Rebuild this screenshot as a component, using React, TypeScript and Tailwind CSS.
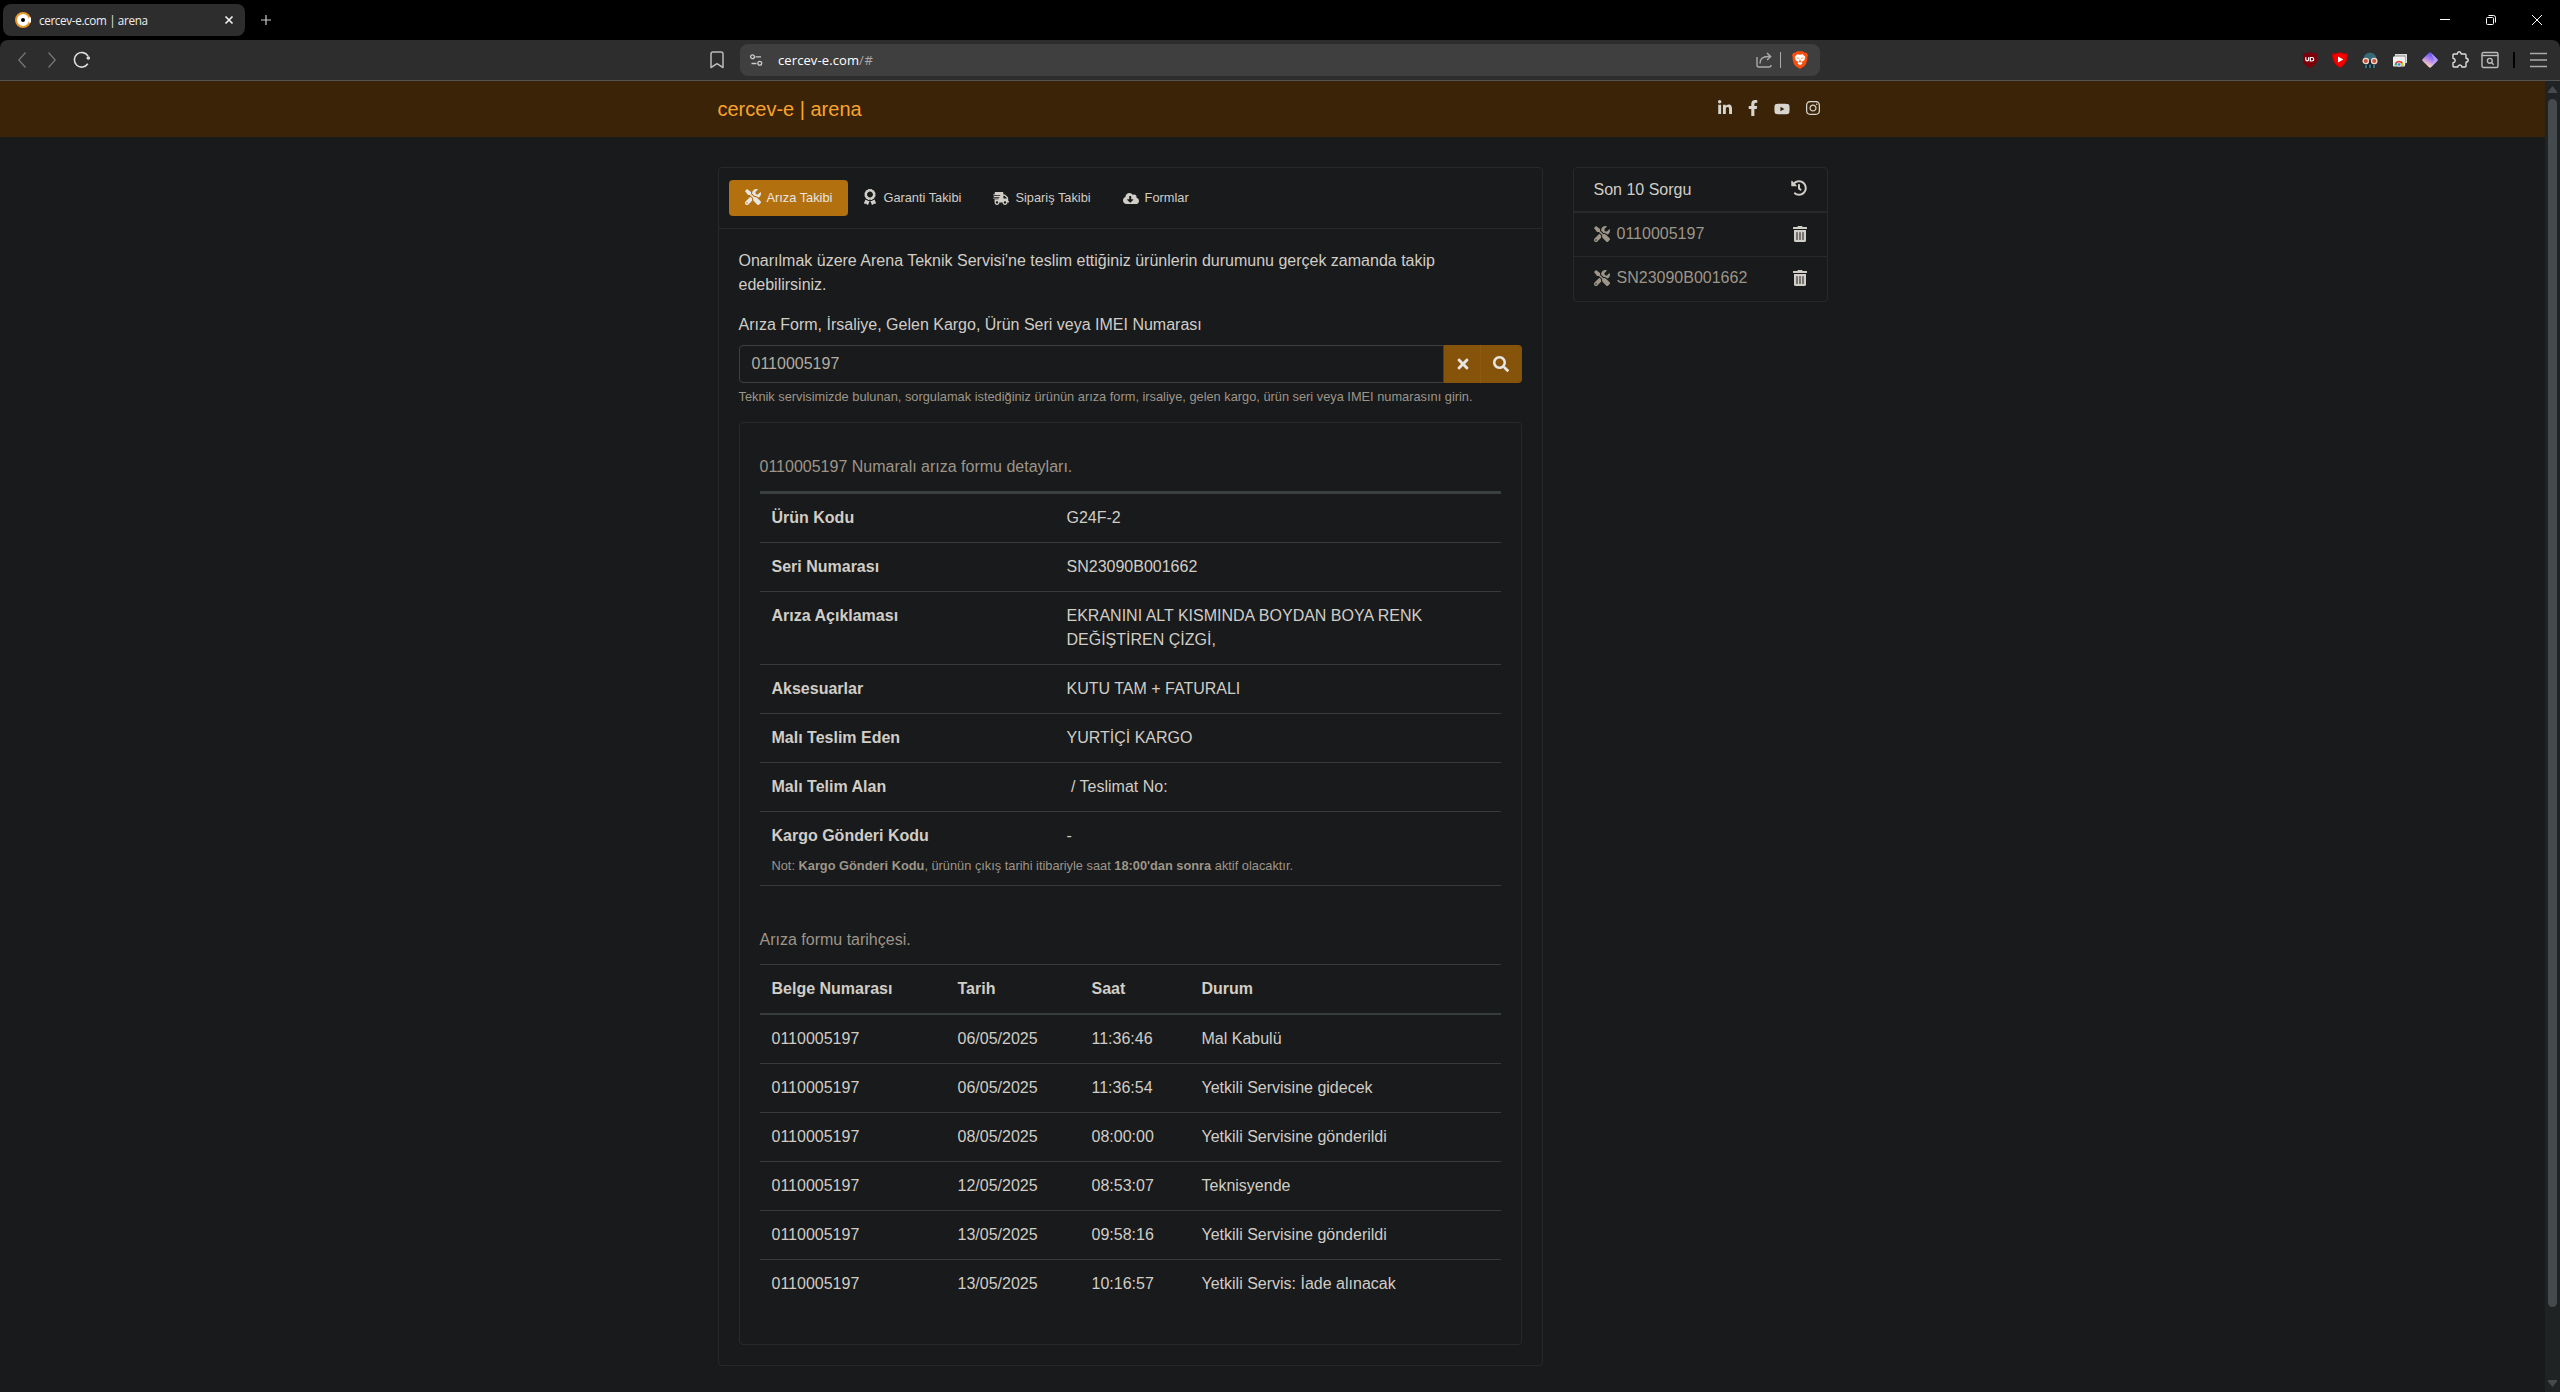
import {
    FaAward,
    FaCloudDownloadAlt,
    FaFacebookF,
    FaHistory,
    FaInstagram,
    FaLinkedinIn,
    FaSearch,
    FaShippingFast,
    FaTimes,
    FaTools,
    FaTrashAlt,
    FaYoutube,
} from "react-icons/fa";

const details = [
    { label: "Ürün Kodu", value: "G24F-2" },
    { label: "Seri Numarası", value: "SN23090B001662" },
    { label: "Arıza Açıklaması", value: "EKRANINI ALT KISMINDA BOYDAN BOYA RENK DEĞİŞTİREN ÇİZGİ," },
    { label: "Aksesuarlar", value: "KUTU TAM + FATURALI" },
    { label: "Malı Teslim Eden", value: "YURTİÇİ KARGO" },
    { label: "Malı Telim Alan", value: "\u00a0/ Teslimat No:" },
];

const history = [
    { no: "0110005197", date: "06/05/2025", time: "11:36:46", status: "Mal Kabulü" },
    { no: "0110005197", date: "06/05/2025", time: "11:36:54", status: "Yetkili Servisine gidecek" },
    { no: "0110005197", date: "08/05/2025", time: "08:00:00", status: "Yetkili Servisine gönderildi" },
    { no: "0110005197", date: "12/05/2025", time: "08:53:07", status: "Teknisyende" },
    { no: "0110005197", date: "13/05/2025", time: "09:58:16", status: "Yetkili Servisine gönderildi" },
    { no: "0110005197", date: "13/05/2025", time: "10:16:57", status: "Yetkili Servis: İade alınacak" },
];

const queries = ["0110005197", "SN23090B001662"];

const TabStrip = () => {
    return (
        <div className="flex h-10 items-center justify-between bg-black pl-[3px] pr-[18px]">
            <div className="flex items-center">
                <div className="flex h-8 w-[242px] items-center rounded-lg bg-[#2d2d2d] pl-3 pr-[11px]">
                    <svg className="size-4" viewBox="0 0 16 16">
                        <circle cx="8" cy="8" r="7" fill="#fff" stroke="#e8962e" strokeWidth="2" />
                        <path d="M14 5.5h2v5h-2z" fill="#fff" />
                        <circle cx="8" cy="8" r="2" fill="#000" />
                    </svg>
                    <span className="ml-2 flex-1 whitespace-nowrap text-[11.7px] leading-4 tracking-[-0.36px] text-[#eee]">cercev-e.com | arena</span>
                    <svg className="size-[10px]" viewBox="0 0 10 10" stroke="#eee" strokeWidth="1.7">
                        <path d="M1.5 1.5l7 7M8.5 1.5l-7 7" />
                    </svg>
                </div>
                <svg className="ml-4 size-[10px]" viewBox="0 0 10 10" stroke="#ccc" strokeWidth="1.2">
                    <path d="M5 0v10M0 5h10" />
                </svg>
            </div>
            <div className="flex items-center gap-9">
                <svg className="size-[10px]" viewBox="0 0 10 10" stroke="#fff">
                    <path d="M0 4.5h10" />
                </svg>
                <svg className="size-[10px]" viewBox="0 0 10 10" fill="none" stroke="#fff">
                    <rect x=".5" y="2.5" width="7" height="7" rx="1" />
                    <path d="M2.5 .5h5a2 2 0 012 2v5" />
                </svg>
                <svg className="size-[10px]" viewBox="0 0 10 10" stroke="#fff">
                    <path d="M0 0l10 10M10 0L0 10" />
                </svg>
            </div>
        </div>
    )
}

const Extensions = () => {
    return (
        <div className="flex items-center">
            <svg className="size-4" viewBox="0 0 16 16">
                <path d="M8 0c2.500 1.200 5 1.500 7 1.500V8c0 4-3.500 6-7 8-3.500-2-7-4-7-8V1.500C3 1.500 5.500 1.200 8 0z" fill="#7c0009" />
                <path d="M3.800 5.200v2.300a1.400 1.400 0 002.800 0V5.200" fill="none" stroke="#fff" strokeWidth="1.200" />
                <path d="M8.300 5.500v3.500h1.700a1.700 1.700 0 000-3.500z" fill="none" stroke="#fff" strokeWidth="1.200" />
            </svg>
            <svg className="ml-[14px] size-4" viewBox="0 0 16 16">
                <path d="M8 0c2.500 1.300 5.500 1.600 8 1.600C16 8.500 13.500 13.500 8 16 2.500 13.500 0 8.500 0 1.600 2.500 1.600 5.500 1.300 8 0z" fill="#c80000" />
                <path d="M8 1c2.200 1.100 4.500 1.400 6.700 1.500C14.500 8.200 12.400 12.500 8 14.800 3.600 12.500 1.500 8.200 1.300 2.500 3.500 2.400 5.800 2.100 8 1z" fill="#f60000" />
                <path d="M6 4.600v5.800l5.300-2.900z" fill="#fff" />
            </svg>
            <svg className="ml-[14px] size-4" viewBox="0 0 16 16">
                <path d="M1.500 8C1.500 3.500 4 .8 8 .8s6.500 2.700 6.500 7.200z" fill="#386977" />
                <path d="M2.500 8h11v8h-11z" fill="#16242b" />
                <circle cx="3.800" cy="9" r="2.700" fill="#c7553a" stroke="#f1d9cf" strokeWidth="1.300" />
                <circle cx="12.200" cy="9" r="2.700" fill="#c7553a" stroke="#f1d9cf" strokeWidth="1.300" />
                <path d="M3 13h2v3H3zM7 12.500h2V16H7zM11 13h2v3h-2z" fill="#3a7183" />
            </svg>
            <svg className="ml-[14px] size-4" viewBox="0 0 16 16">
                <rect x="3" y="2" width="12" height="9" fill="#dcdcdc" />
                <rect x="2.500" y="3.500" width="11" height="9" fill="#8f9092" />
                <rect x="1" y="4.500" width="12" height="10" rx="1" fill="#f1f1f1" />
                <path d="M2.500 13.500a4.500 4.500 0 019 0z" fill="#34a853" />
                <path d="M3 11.500A4.500 4.500 0 0111 11z" fill="#ea4335" />
                <path d="M11.500 13.500H8l2.500-3.200a4.500 4.500 0 011 3.200z" fill="#fbbc05" />
                <circle cx="7" cy="12.500" r="1.800" fill="#4285f4" stroke="#fff" strokeWidth=".7" />
            </svg>
            <svg className="ml-[14px] size-4" viewBox="0 0 16 16">
                <defs>
                    <linearGradient id="gem" x1=".7" y1=".1" x2=".3" y2=".9">
                        <stop offset="0" stopColor="#5b4dfb" />
                        <stop offset=".5" stopColor="#b384ee" />
                        <stop offset="1" stopColor="#ffd9b8" />
                    </linearGradient>
                </defs>
                <path d="M7 .8a1.500 1.500 0 012 0L15.300 7a1.500 1.500 0 010 2L9 15.200a1.500 1.500 0 01-2 0L.7 9a1.500 1.500 0 010-2z" fill="url(#gem)" />
                <path d="M9 .8L15.300 7a1.500 1.500 0 010 2L9 15.200 12 8z" fill="#c7b9ff" opacity=".6" />
            </svg>
            <svg className="ml-[13px] size-[18px]" viewBox="0 0 18 18" fill="none" stroke="#ddd" strokeWidth="1.400" strokeLinejoin="round">
                <path d="M3 3h3.200c.3-1.500 1-2.200 2-2.200s1.800.7 2.100 2.200H14c.6 0 1 .4 1 1v3.200c1.500.2 2.200 1 2.200 2s-.7 1.800-2.200 2V15c0 .6-.4 1-1 1h-3c-.3-1.400-1-2-2.200-2s-1.800.6-2.100 2H3c-.6 0-1-.4-1-1v-3.200c1.500-.3 2.200-1 2.200-2.200S3.500 7.500 2 7.200V4c0-.6.4-1 1-1z" />
            </svg>
            <svg className="ml-3 size-[18px]" viewBox="0 0 18 18" fill="none" stroke="#bbb" strokeWidth="1.400">
                <rect x="1" y="1.500" width="16" height="15" rx="1.500" />
                <path d="M1 4.500h16" />
                <circle cx="8.800" cy="9.800" r="2.400" />
                <path d="M10.500 11.500l2.200 2.200" />
            </svg>
            <div className="ml-[14px] h-4 w-0.5 bg-black" />
            <svg className="ml-[15px] h-4 w-[17px]" viewBox="0 0 17 16" stroke="#aaa" strokeWidth="1.500">
                <path d="M0 1.500h17M0 8h17M0 14.500h17" />
            </svg>
        </div>
    )
}

const Toolbar = () => {
    return (
        <div className="bg-black">
            <div className="flex h-[41px] items-center rounded-t-lg border-b border-[#545454] bg-[#2d2d2d] pl-[18px] pr-[13px]">
                <svg className="h-4 w-2" viewBox="0 0 8 16" fill="none" stroke="#777" strokeWidth="1.300">
                    <path d="M7.500 .5L.8 8l6.700 7.500" />
                </svg>
                <svg className="ml-[22px] h-4 w-2" viewBox="0 0 8 16" fill="none" stroke="#777" strokeWidth="1.300">
                    <path d="M.5 .5L7.200 8 .5 15.500" />
                </svg>
                <svg className="ml-[17px] size-[18px]" viewBox="0 0 18 18" fill="none" stroke="#ddd" strokeWidth="1.600">
                    <path d="M14.800 12.800A7.300 7.300 0 1115 5.200" />
                    <circle cx="15.300" cy="7" r="1.800" fill="#ddd" stroke="none" />
                </svg>
                <svg className="ml-[619px] h-[18px] w-[14px]" viewBox="0 0 14 18" fill="none" stroke="#bbb" strokeWidth="1.500" strokeLinejoin="round">
                    <path d="M3 1h8a2 2 0 012 2v13.500l-6-3.800-6 3.800V3a2 2 0 012-2z" />
                </svg>
                <div className="ml-4 flex h-8 w-[1080px] items-center rounded-lg bg-[#3f3f3f] pl-[10px] pr-3">
                    <svg className="h-3 w-[13px]" viewBox="0 0 13 12" fill="none" stroke="#ccc" strokeWidth="1.300">
                        <circle cx="2.500" cy="2.800" r="1.900" />
                        <path d="M5.500 2.800H11M1.500 9.500h5" />
                        <circle cx="9.800" cy="9.300" r="1.900" />
                    </svg>
                    <span className="ml-[15px] flex-1 text-[13px] leading-5 tracking-[0.1px] text-white">cercev-e.com<span className="tracking-[0.6px] text-[#aaa]">/#</span></span>
                    <svg className="size-4" viewBox="0 0 16 16" fill="none" stroke="#aaa" strokeWidth="1.400">
                        <path d="M1 5v8a2 2 0 002 2h10a2 2 0 002-2M4 11.500C4 7 7 4.500 12 4.500h2.500M11 1l3.700 3.500L11 8" />
                    </svg>
                    <div className="ml-2 h-4 w-px bg-[#aaa]" />
                    <svg className="ml-[11px] h-[18px] w-4" viewBox="0 0 16 18">
                        <path d="M5 .3h6l1.500 1.500 1.700-.2L16 4l-.6 1.700c.3 3-1.200 8-3.200 9.600L8 18l-4.200-2.700C1.800 13.700.3 8.700.6 5.700L0 4l1.800-2.400 1.700.2z" fill="#fb4d0e" />
                        <path d="M5.200 3.300l2.800.4 2.800-.4 2.500 2.700-1 3.300-2.800 1.700 1 1.500L8 14.200l-2.500-1.700 1-1.500-2.800-1.700-1-3.300z" fill="#fff" />
                        <path d="M4.300 6.300l2.500.6-.6 1zM11.700 6.300l-2.500.6.6 1zM8 7.500l.6 2.600.8.600L8 11.500l-1.400-.8.8-.6z" fill="#fb4d0e" />
                    </svg>
                </div>
                <div className="ml-auto">
                    <Extensions />
                </div>
            </div>
        </div>
    )
}

const Navbar = () => {
    return (
        <div className="h-14 bg-[#3a2306]">
            <div className="mx-auto flex h-14 w-[1110px] items-center justify-between">
                <a className="text-[20px] leading-[30px] text-[#f9a42b]">cercev-e | arena</a>
                <div className="-mt-0.5 mr-2 flex items-center text-base text-[#d8d4cf]">
                    <FaLinkedinIn className="w-[14px]" />
                    <FaFacebookF className="ml-4 w-[10px]" />
                    <FaYoutube className="ml-4 mt-0.5" />
                    <FaInstagram className="ml-4 w-[14px]" />
                </div>
            </div>
        </div>
    )
}

const Tabs = () => {
    return (
        <div className="flex h-[61px] border-b border-[#272a2b] px-[10px] pt-3 text-[12.8px] leading-5">
            <a className="flex h-9 items-center rounded bg-[#b3700e] px-4 text-[#e8e6e3]">
                <FaTools className="-mt-[3px] mr-[6px] size-4" />
                Arıza Takibi
            </a>
            <a className="flex h-9 items-center px-4">
                <FaAward className="-mt-[3px] mr-[7px] h-4 w-3" />
                Garanti Takibi
            </a>
            <a className="flex h-9 items-center px-4">
                <FaShippingFast className="mr-[6px] h-[13px] w-4" />
                Sipariş Takibi
            </a>
            <a className="flex h-9 items-center px-4">
                <FaCloudDownloadAlt className="mr-[6px] h-[13px] w-4" />
                Formlar
            </a>
        </div>
    )
}

const DetailTable = () => {
    return (
        <div>
            <p className="py-3 text-[#9e9589]">0110005197 Numaralı arıza formu detayları.</p>
            <table className="w-full table-fixed border-separate border-spacing-0 border-t-[3px] border-[#3a3f40] text-left">
                <tbody>
                    {details.map((row) => (
                        <tr key={row.label} className="align-top">
                            <th className="w-[295px] border-b border-[#363b3d] p-3 font-bold">{row.label}</th>
                            <td className="border-b border-[#363b3d] p-3">{row.value}</td>
                        </tr>
                    ))}
                    <tr className="align-top">
                        <td colSpan={2} className="border-b border-[#363b3d] px-3 pb-[10px] pt-3">
                            <div className="flex">
                                <b className="w-[295px]">Kargo Gönderi Kodu</b>
                                <span>-</span>
                            </div>
                            <small className="mt-2 block text-[12.8px] leading-[19px] text-[#9e9589]">
                                Not: <b>Kargo Gönderi Kodu</b>, ürünün çıkış tarihi itibariyle saat <b>18:00'dan sonra</b> aktif olacaktır.
                            </small>
                        </td>
                    </tr>
                </tbody>
            </table>
        </div>
    )
}

const HistoryTable = () => {
    return (
        <div className="mt-[30px]">
            <p className="py-3 text-[#9e9589]">Arıza formu tarihçesi.</p>
            <table className="mb-4 w-full table-fixed border-separate border-spacing-0 border-t border-[#363b3d] text-left">
                <thead>
                    <tr>
                        <th className="w-[186px] border-b-2 border-[#363b3d] p-3">Belge Numarası</th>
                        <th className="w-[134px] border-b-2 border-[#363b3d] p-3">Tarih</th>
                        <th className="w-[110px] border-b-2 border-[#363b3d] p-3">Saat</th>
                        <th className="border-b-2 border-[#363b3d] p-3">Durum</th>
                    </tr>
                </thead>
                <tbody className="[&>tr:last-child>td]:border-b-0">
                    {history.map((row) => (
                        <tr key={row.time}>
                            <td className="border-b border-[#363b3d] p-3">{row.no}</td>
                            <td className="border-b border-[#363b3d] p-3">{row.date}</td>
                            <td className="border-b border-[#363b3d] p-3">{row.time}</td>
                            <td className="border-b border-[#363b3d] p-3">{row.status}</td>
                        </tr>
                    ))}
                </tbody>
            </table>
        </div>
    )
}

const QueryCard = () => {
    return (
        <div className="w-[255px] rounded border border-[#272a2b]">
            <div className="flex h-[45px] items-center justify-between border-b-2 border-[#272a2b] px-5">
                Son 10 Sorgu
                <FaHistory className="-mt-[3px] size-4" />
            </div>
            {queries.map((query) => (
                <div key={query} className="flex h-11 items-center border-b border-[#272a2b] px-5 pb-px last:border-b-0 last:pb-0.5">
                    <FaTools className="size-4 text-[#9e9589]" />
                    <span className="ml-[7px] text-[#9e9589]">{query}</span>
                    <FaTrashAlt className="ml-auto h-4 w-[14px]" />
                </div>
            ))}
        </div>
    )
}

const Scrollbar = () => {
    return (
        <div className="flex w-[15px] flex-col items-center bg-[#202324] py-[5px]">
            <svg className="h-[7px] w-[9px]" viewBox="0 0 9 7" fill="#454a4d">
                <path d="M4.500 0L9 5.500V7H0V5.500z" />
            </svg>
            <div className="mt-[6px] h-[1208px] w-[9px] rounded-full bg-[#454a4d]" />
            <svg className="mt-auto h-[7px] w-[9px]" viewBox="0 0 9 7" fill="#454a4d">
                <path d="M4.500 7L9 1.500V0H0v1.500z" />
            </svg>
        </div>
    )
}

const App = () => {
    return (
        <div className="flex h-[1392px] w-[2560px] flex-col overflow-hidden bg-[#181a1b] font-['Open_Sans',sans-serif]">
            <TabStrip />
            <Toolbar />
            <div className="flex flex-1 font-['Liberation_Sans',Arial,sans-serif] text-base text-[#d1cdc7]">
                <div className="flex-1">
                    <Navbar />
                    <div className="mx-auto mt-[30px] flex w-[1110px] items-start gap-[30px]">
                        <div className="w-[825px] rounded border border-[#272a2b]">
                            <Tabs />
                            <div className="p-5">
                                <p className="mb-4">
                                    Onarılmak üzere Arena Teknik Servisi'ne teslim ettiğiniz ürünlerin durumunu gerçek zamanda takip edebilirsiniz.
                                </p>
                                <label className="mb-2 block">Arıza Form, İrsaliye, Gelen Kargo, Ürün Seri veya IMEI Numarası</label>
                                <div className="flex h-[38px]">
                                    <div className="flex-1 rounded-l border border-[#3c4144] px-3 py-[6px] text-[#b2aca2]">0110005197</div>
                                    <button className="flex w-9 items-center justify-center bg-[#85530a] pl-0.5 text-[#e8e6e3]">
                                        <FaTimes className="size-4" />
                                    </button>
                                    <button className="flex w-[42px] items-center justify-center rounded-r border-l border-[#8d590c] bg-[#85530a] text-[#e8e6e3]">
                                        <FaSearch className="size-4" />
                                    </button>
                                </div>
                                <small className="mb-4 mt-1 block text-[12.8px] leading-[19px] text-[#9e9589]">
                                    Teknik servisimizde bulunan, sorgulamak istediğiniz ürünün arıza form, irsaliye, gelen kargo, ürün seri veya IMEI numarasını girin.
                                </small>
                                <div className="rounded border border-[#272a2b] p-5">
                                    <DetailTable />
                                    <HistoryTable />
                                </div>
                            </div>
                        </div>
                        <QueryCard />
                    </div>
                </div>
                <Scrollbar />
            </div>
        </div>
    )
}

export default App;
